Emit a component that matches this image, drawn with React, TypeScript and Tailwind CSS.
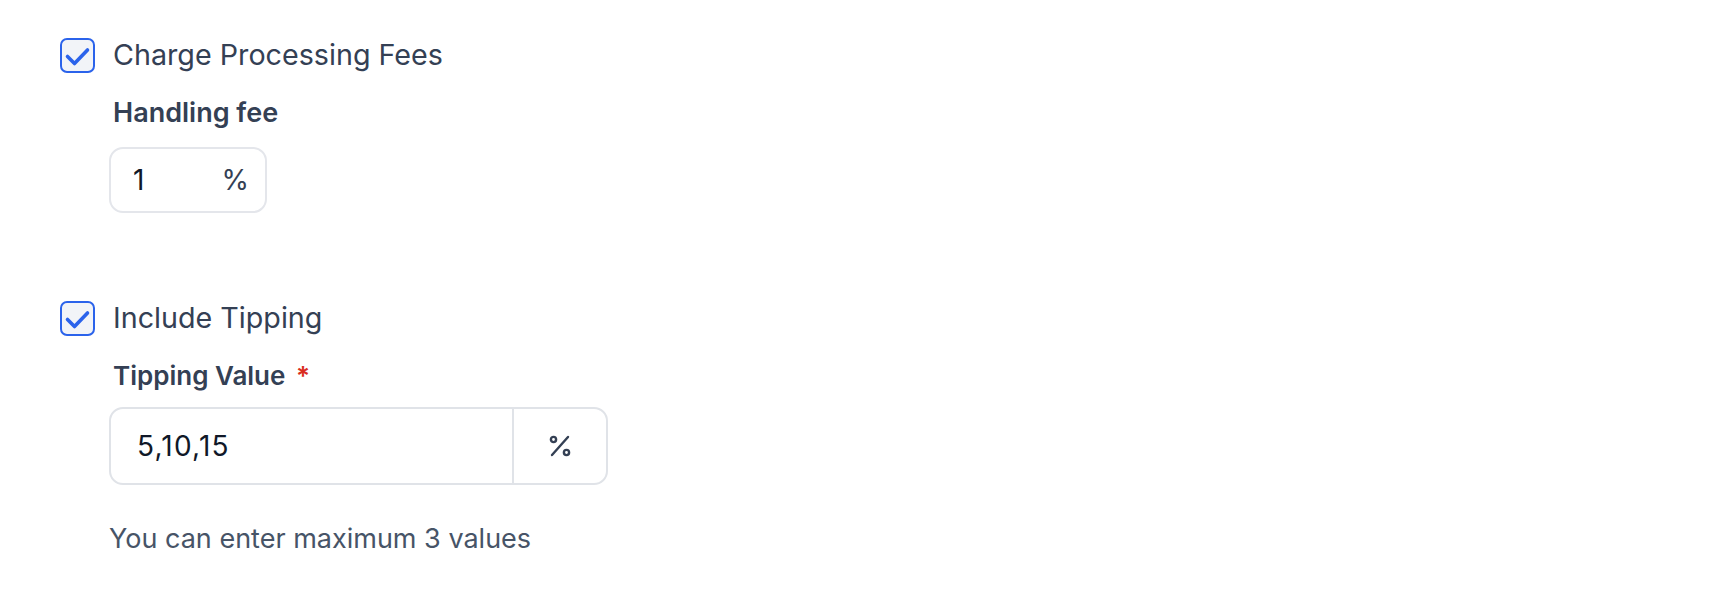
import { useState } from "react";

function CheckBox({ checked, onChange }: { checked: boolean; onChange: () => void }) {
  return (
    <button
      type="button"
      onClick={onChange}
      className={`w-[35px] h-[35px] shrink-0 rounded-[7px] border-2 flex items-center justify-center ${
        checked ? "border-[#2b63eb] bg-[#f2f4f8]" : "border-[#d0d5dd] bg-white"
      }`}
    >
      {checked && (
        <svg viewBox="0 0 31 31" fill="none" className="w-[31px] h-[31px]">
          <path
            d="M5.5 16.5l7 7L25.5 10"
            stroke="#2b63eb"
            strokeWidth="3.6"
            strokeLinecap="round"
            strokeLinejoin="round"
          />
        </svg>
      )}
    </button>
  );
}

export default function App() {
  const [fees, setFees] = useState(true);
  const [tipping, setTipping] = useState(true);
  const [fee, setFee] = useState("1");
  const [tips, setTips] = useState("5,10,15");

  return (
    <div className="min-h-screen bg-white pl-[60px] pt-[37px] font-['Inter',sans-serif] text-[#344054]">
      {/* Processing fees */}
      <div className="flex items-center gap-[18px]">
        <CheckBox checked={fees} onChange={() => setFees(!fees)} />
        <span className="text-[28.7px] leading-[36px]">Charge Processing Fees</span>
      </div>
      <div className="pl-[53px]">
        <p className="mt-[24px] text-[27px] leading-[32px] font-semibold">Handling fee</p>
        <div className="mt-[18px] -ml-[4px] w-[158px] h-[66px] flex items-center rounded-[14px] border-2 border-[#e4e6eb] bg-white pl-[22px] pr-[16px]">
          <input
            value={fee}
            onChange={(e) => setFee(e.target.value)}
            className="w-full min-w-0 bg-transparent text-[28px] tracking-[1.2px] text-[#101828] focus:outline-none"
          />
          <span className="text-[28px] text-[#344054]">%</span>
        </div>
      </div>

      {/* Tipping */}
      <div className="mt-[87px] flex items-center gap-[18px]">
        <CheckBox checked={tipping} onChange={() => setTipping(!tipping)} />
        <span className="text-[28.7px] leading-[36px]">Include Tipping</span>
      </div>
      <div className="pl-[53px]">
        <p className="mt-[24px] text-[26px] leading-[32px] font-semibold">
          Tipping Value <span className="ml-[4px] text-[#d92d20]">*</span>
        </p>
        <div className="mt-[15px] -ml-[4px] w-[499px] h-[78px] flex rounded-[14px] border-2 border-[#e0e3e8] bg-white">
          <input
            value={tips}
            onChange={(e) => setTips(e.target.value)}
            className="flex-1 min-w-0 bg-transparent pl-[26px] text-[28px] tracking-[1.2px] text-[#101828] focus:outline-none"
          />
          <div className="w-[94px] shrink-0 flex items-center justify-center border-l-2 border-[#e0e3e8]">
            <svg viewBox="0 0 22 22" fill="none" stroke="#344054" strokeWidth="2.4" strokeLinecap="round" className="w-[22px] h-[22px]">
              <line x1="19" y1="2" x2="3" y2="20" />
              <circle cx="4.5" cy="4.5" r="2.6" />
              <circle cx="17.5" cy="17.5" r="2.6" />
            </svg>
          </div>
        </div>
        <p className="mt-[38px] -ml-[4px] text-[27px] leading-[32px] text-[#475467]">You can enter maximum 3 values</p>
      </div>
    </div>
  );
}
